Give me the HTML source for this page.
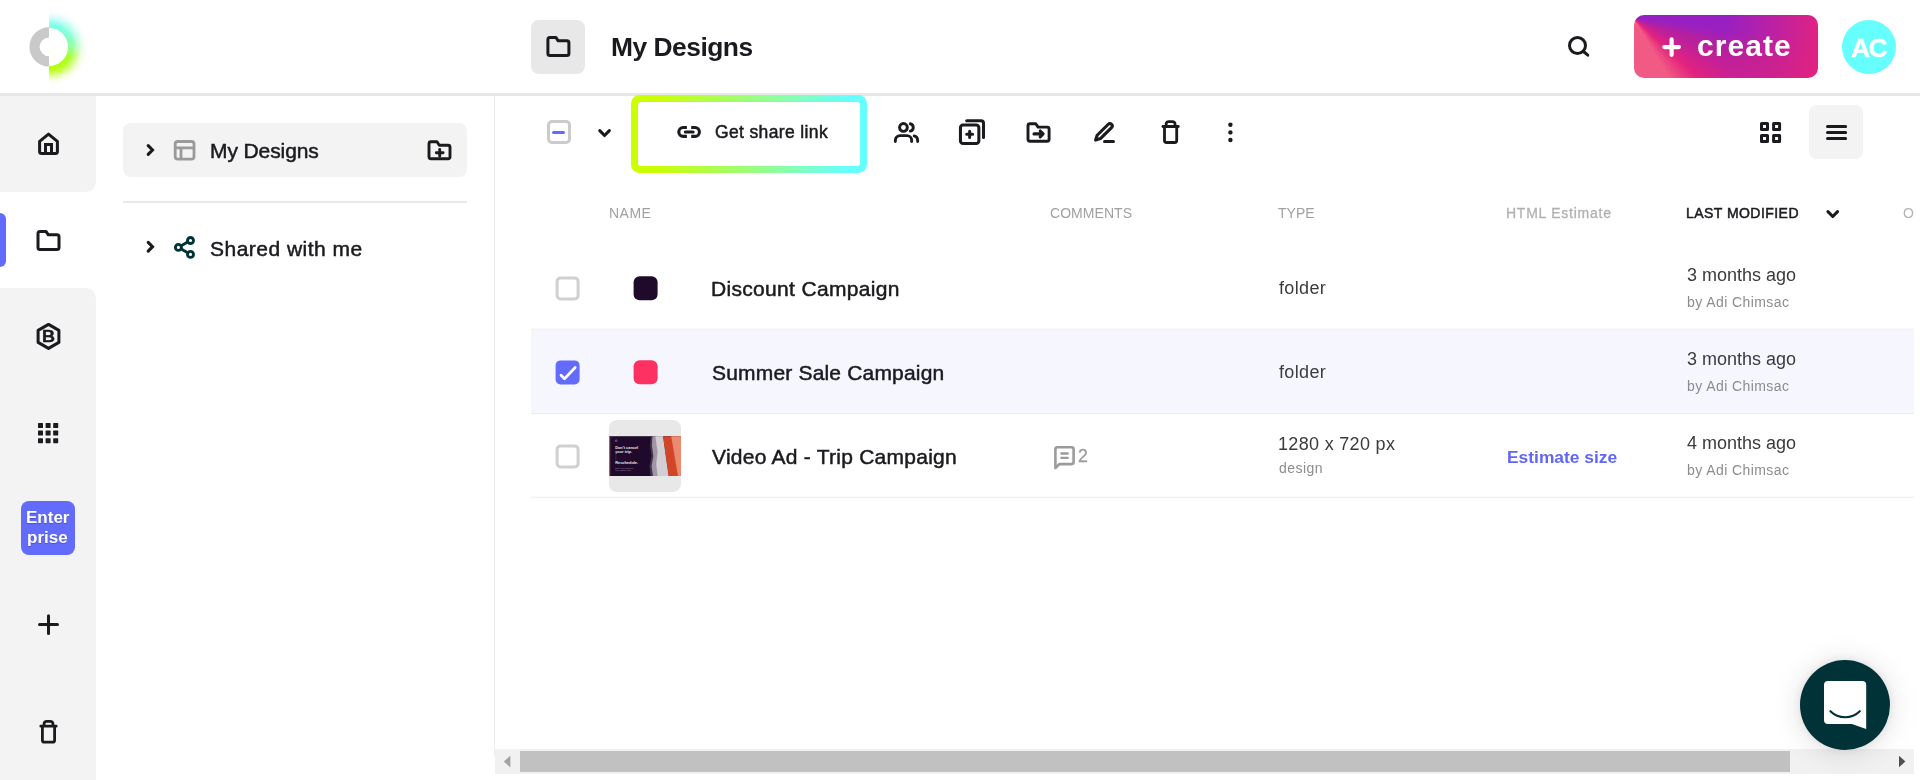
<!DOCTYPE html>
<html lang="en">
<head>
<meta charset="utf-8">
<title>My Designs</title>
<style>
*{box-sizing:border-box;margin:0;padding:0}
html,body{width:1920px;height:780px;overflow:hidden;background:#fff}
body{font-family:"Liberation Sans",sans-serif;color:#1b1b1f;position:relative}
.abs{position:absolute}
.t{position:absolute;white-space:nowrap;line-height:1;color:#1b1b1f;will-change:transform}
.med{-webkit-text-stroke:.5px currentColor}
#icons{position:absolute;left:0;top:0;width:1920px;height:780px;pointer-events:none}
#hline{left:0;top:93px;width:1920px;height:3px;background:#e7e7e7}
#logoglow{left:49px;top:8px;width:39px;height:78px;background:linear-gradient(180deg,#e2f0ff 0%,#a8f6fb 10%,#7dffea 20%,#7dffd0 35%,#8eff98 50%,#a8ff20 64%,#b4ff00 80%,#d4ff60 100%)}
#logofade{left:49px;top:8px;width:39px;height:78px;background:radial-gradient(circle at 0 39px,#fff 0,#fff 18.6px,rgba(255,255,255,0) 19.4px,rgba(255,255,255,.1) 23.5px,rgba(255,255,255,.5) 28.5px,rgba(255,255,255,.86) 33.5px,#fff 38.5px)}
#rail1{left:0;top:96px;width:96px;height:95.5px;background:#f3f3f3;border-radius:0 0 10px 0}
#rail2{left:0;top:287.6px;width:96px;height:493px;background:#f3f3f3;border-radius:0 10px 0 0}
#ind{left:0;top:213px;width:6px;height:54px;background:#636bfd;border-radius:0 6px 6px 0}
#ent{left:21px;top:501px;width:54px;height:54px;background:#636bfd;border-radius:8px}
#sideline{left:494px;top:96px;width:1px;height:660px;background:#ededed}
#myd{left:123px;top:123px;width:344px;height:54px;background:#f3f3f3;border-radius:8px}
#sdiv{left:123px;top:201px;width:344px;height:2px;background:#e9e9e9}
#ftile{left:531px;top:20px;width:54px;height:54px;background:#e8e8e8;border-radius:8px}
#create{left:1634px;top:15px;width:184px;height:63px;border-radius:10px;
 background:linear-gradient(90deg,rgba(228,34,127,0) 50%,rgba(228,34,127,.55) 80%,rgba(228,34,127,.95) 100%),
 conic-gradient(from 90deg at 0 4px,#981fc2 0deg,#9a20c0 7deg,#b3209f 17deg,#c62096 28deg,#e3227e 42deg,#ec447f 52deg,#f15a85 59deg,#f15a85 90deg,#981fc2 90deg)}
#avatar{left:1842px;top:20px;width:54px;height:54px;border-radius:50%;background:#67fefe}
.cb{width:24px;height:23.6px;border:3px solid #cbcbcb;border-radius:5px;background:#fff}
.cb.on{background:#636bfd;border-color:#636bfd}
#share{left:631px;top:95px;width:236px;height:78px;border-radius:8.5px;background:linear-gradient(90deg,#ccff00 0%,#caff08 12%,#99ff80 52%,#66ffff 92%,#66ffff 100%)}
#sharein{left:638px;top:102px;width:222.4px;height:64.3px;border-radius:3px;background:#fff}
#listtile{left:1809px;top:105px;width:54px;height:54px;background:#f3f3f3;border-radius:8px}
.row{left:531px;width:1383px;height:84px}
.rline{left:531px;width:1383px;height:2px;background:linear-gradient(#fafafa 0,#fafafa 50%,#f1f1f1 50%,#f1f1f1 100%)}
.sw{left:634px;width:24px;height:24px;border-radius:6px}
#thumb{left:609px;top:420px;width:72px;height:72px;border-radius:8px;background:#e8e8e8}
#sbtrack{left:495px;top:749px;width:1419px;height:25px;background:#f1f1f1}
#sbthumb{left:520px;top:751px;width:1270px;height:21px;background:#c1c1c1}
#chat{left:1800px;top:660px;width:90px;height:90px;border-radius:50%;background:#003238;box-shadow:0 2px 30px rgba(0,0,0,.13),0 0 8px rgba(0,0,0,.08)}
</style>
</head>
<body>
<!-- header -->
<header class="abs" id="hdr"></header>
<div class="abs" id="hline"></div>
<div class="abs" id="logoglow"></div><div class="abs" id="logofade"></div>
<!-- left rail -->
<nav class="abs" id="rail1"></nav><div class="abs" id="rail2"></div><div class="abs" id="ind"></div>
<div class="abs" id="ent"></div>
<div class="t " style="left:26.2px;top:509.21px;font-size:17px;font-weight:bold;color:#fff;text-shadow:0 1px 1px rgba(0,0,0,.25)">Enter</div>
<div class="t " style="left:27.4px;top:529.11px;font-size:17px;font-weight:bold;color:#fff;text-shadow:0 1px 1px rgba(0,0,0,.25)">prise</div>
<!-- side panel -->
<div class="abs" id="sideline"></div><div class="abs" id="myd"></div><div class="abs" id="sdiv"></div>
<div class="t med" style="left:210px;top:140.12px;font-size:21px;letter-spacing:-.1px">My Designs</div>
<div class="t med" style="left:210.3px;top:238.12px;font-size:21px;letter-spacing:.48px">Shared with me</div>
<!-- main header -->
<div class="abs" id="ftile"></div>
<div class="t " style="left:610.5px;top:34.35px;font-size:26.4px;font-weight:bold;letter-spacing:-.5px">My Designs</div>
<div class="abs" id="create"></div>
<div class="t " style="left:1697px;top:30.81px;font-size:30px;font-weight:bold;color:#fff;letter-spacing:1.05px">create</div>
<div class="abs" id="avatar"></div>
<div class="t " style="left:1851px;top:34.75px;font-size:26.4px;font-weight:bold;color:#fff;letter-spacing:-1.6px;-webkit-text-stroke:.4px #fff">AC</div>
<!-- toolbar -->
<div class="abs cb" style="left:547px;top:120px;width:24px;height:24px"></div>
<div class="abs" style="left:552.3px;top:131px;width:12.7px;height:3px;background:#636bfd;border-radius:2px"></div>
<div class="abs" id="share"></div><div class="abs" id="sharein"></div>
<div class="t med" style="left:714.6px;top:124.29px;font-size:17.5px;letter-spacing:.36px">Get share link</div>
<div class="abs" id="listtile"></div>
<!-- table header -->
<div class="t " style="left:609px;top:206.25px;font-size:14px;color:#a1a1a1;letter-spacing:.5px">NAME</div>
<div class="t " style="left:1049.6px;top:206.25px;font-size:14px;color:#a1a1a1;letter-spacing:.05px">COMMENTS</div>
<div class="t " style="left:1278px;top:206.25px;font-size:14px;color:#a1a1a1">TYPE</div>
<div class="t " style="left:1506px;top:206.25px;font-size:14px;color:#b1b1b1;letter-spacing:.75px;-webkit-text-stroke:.3px #b1b1b1">HTML Estimate</div>
<div class="t med" style="left:1686.1px;top:206.25px;font-size:14px;letter-spacing:.45px">LAST MODIFIED</div>
<div class="abs" style="left:1900px;top:200px;width:14px;height:30px;overflow:hidden"><div class="t " style="left:3px;top:6.25px;font-size:14px;color:#b3b3b3">OWNER</div></div>
<!-- rows -->
<div class="abs row" style="top:246px"></div>
<div class="abs rline" style="top:328px"></div>
<div class="abs row" style="top:330px;background:#f6f6fe;border-bottom:1px solid #eaecf5"></div>
<div class="abs row" style="top:414px"></div>
<div class="abs rline" style="top:496px"></div>
<!-- row Discount Campaign -->
<div class="abs cb" style="left:556px;top:276px;height:24px;transform:translate(-.4px,.4px);border-color:#d0d0d0"></div>
<div class="abs sw" style="top:276px;background:#200a2c;transform:translate(-.4px,.3px)"></div>
<div class="t med" style="left:711.2px;top:278.12px;font-size:21px;letter-spacing:0.32px">Discount Campaign</div>
<div class="t " style="left:1278.7px;top:278.76px;font-size:18px;color:#3b3b3e;letter-spacing:.35px">folder</div>
<div class="t " style="left:1687px;top:265.66px;font-size:18px;color:#3b3b3e">3 months ago</div>
<div class="t " style="left:1686.7px;top:294.85px;font-size:14px;color:#8c8c8e;letter-spacing:.42px">by Adi Chimsac</div>
<!-- row Summer Sale Campaign -->
<div class="abs cb on" style="left:556px;top:360px;height:24px;transform:translate(-.4px,.4px)"></div>
<div class="abs sw" style="top:360px;background:#fe3262;transform:translate(-.4px,.3px)"></div>
<div class="t med" style="left:711.5px;top:362.12px;font-size:21px;letter-spacing:0.18px">Summer Sale Campaign</div>
<div class="t " style="left:1278.7px;top:362.76px;font-size:18px;color:#3b3b3e;letter-spacing:.35px">folder</div>
<div class="t " style="left:1687px;top:349.66px;font-size:18px;color:#3b3b3e">3 months ago</div>
<div class="t " style="left:1686.7px;top:378.85px;font-size:14px;color:#8c8c8e;letter-spacing:.42px">by Adi Chimsac</div>
<!-- row Video Ad - Trip Campaign -->
<div class="abs cb" style="left:556px;top:444px;height:24px;transform:translate(-.4px,.4px);border-color:#d0d0d0"></div>
<div class="t med" style="left:711.8px;top:446.12px;font-size:21px;letter-spacing:0.25px">Video Ad - Trip Campaign</div>
<div class="t " style="left:1687px;top:433.66px;font-size:18px;color:#3b3b3e">4 months ago</div>
<div class="t " style="left:1686.7px;top:462.85px;font-size:14px;color:#8c8c8e;letter-spacing:.42px">by Adi Chimsac</div>
<div class="abs" id="thumb"></div>
<div class="t " style="left:1078.3px;top:447.82px;font-size:17.7px;color:#9b9b9b;-webkit-text-stroke:.3px #9b9b9b">2</div>
<div class="t " style="left:1278px;top:434.66px;font-size:18px;color:#3b3b3e;letter-spacing:.32px">1280 x 720 px</div>
<div class="t " style="left:1278.6px;top:461.05px;font-size:14px;color:#8c8c8e;letter-spacing:.45px">design</div>
<div class="t " style="left:1507px;top:449.27px;font-size:17.4px;font-weight:bold;color:#6166f7;letter-spacing:0">Estimate size</div>
<!-- scrollbar -->
<div class="abs" id="sbtrack"></div><div class="abs" id="sbthumb"></div>
<div class="abs" id="chat"></div>
<svg id="icons" viewBox="0 0 1920 780" width="1920" height="780">
<defs>
<clipPath id="lhalf"><rect x="20" y="20" width="29" height="60"/></clipPath>
<g id="folder"><path d="M-10.5 7V-7a2 2 0 0 1 2-2h6l2.3 3.4h8.7a2 2 0 0 1 2 2V7a2 2 0 0 1-2 2h-17a2 2 0 0 1-2-2z"/></g>
<g id="trash" stroke-width="2.8"><path d="M-7.7 -5.7H7.7M-4.45 -5.7V-8a2.6 2.6 0 0 1 2.6-2.6H1.85a2.6 2.6 0 0 1 2.6 2.6V-5.7M-6.1 -5.7V8.3a2 2 0 0 0 2 2H4.1a2 2 0 0 0 2-2V-5.7"/></g>
<g id="chevr"><path d="M-2.3 -4.4L2 0L-2.3 4.4"/></g>
<g id="chevd"><path d="M-4.8 -2.45L0 2.5L4.8 -2.45" stroke-linejoin="round"/></g>
</defs>
<!-- logo -->
<circle cx="49" cy="46.8" r="14.5" fill="none" stroke="#c9c9c9" stroke-width="10.2" clip-path="url(#lhalf)"/>
<g fill="none" stroke="#1b1b1f" stroke-width="3" stroke-linecap="round" stroke-linejoin="round">
<!-- rail: home -->
<path d="M39.6 141.3L48.5 134.1L57.4 141.3V151.4a2 2 0 0 1-2 2H41.6a2 2 0 0 1-2-2z"/>
<path d="M45.5 153V144.5H51.5V153" stroke-linejoin="miter"/>
<!-- rail: folder -->
<use href="#folder" x="48.5" y="240.4"/>
<!-- header folder -->
<use href="#folder" x="558.4" y="46.4"/>
<!-- rail: brand hexagon -->
<path d="M48.5 324.4L58.9 330.4V342.4L48.5 348.4L38.1 342.4V330.4z"/>
<!-- rail: plus -->
<path d="M48.5 615.7V633.6M39.5 624.6H57.5"/>
<!-- rail: trash -->
<use href="#trash" x="48.5" y="731.9"/>
<!-- toolbar trash -->
<use href="#trash" x="1170.6" y="132.2"/>
</g>
<!-- brand B -->
<text transform="translate(48.6 342.1) scale(1.1 1)" text-anchor="middle" font-family="Liberation Sans, sans-serif" font-weight="bold" font-size="16.4" fill="#1b1b1f" stroke="#1b1b1f" stroke-width=".4">B</text>
<!-- rail: grid -->
<g fill="#1b1b1f">
<rect x="38" y="423" width="5" height="5" rx=".6"/><rect x="45.6" y="423" width="5" height="5" rx=".6"/><rect x="53.2" y="423" width="5" height="5" rx=".6"/>
<rect x="38" y="430.6" width="5" height="5" rx=".6"/><rect x="45.6" y="430.6" width="5" height="5" rx=".6"/><rect x="53.2" y="430.6" width="5" height="5" rx=".6"/>
<rect x="38" y="438.2" width="5" height="5" rx=".6"/><rect x="45.6" y="438.2" width="5" height="5" rx=".6"/><rect x="53.2" y="438.2" width="5" height="5" rx=".6"/>
</g>
<!-- chevrons -->
<g fill="none" stroke="#1b1b1f" stroke-width="3.1" stroke-linecap="round" stroke-linejoin="miter">
<use href="#chevr" x="150.5" y="150"/>
<use href="#chevr" x="150.5" y="246.7"/>
<use href="#chevd" x="604.55" y="133"/>
<use href="#chevd" x="1832.75" y="214"/>
</g>
<!-- side: layout icon -->
<g fill="none" stroke="#9a9a9a" stroke-width="2.8" stroke-linejoin="round">
<rect x="175.2" y="141.5" width="18.8" height="17.7" rx="2.6"/>
<path d="M175.2 147.8H194M181 147.8V159"/>
</g>
<!-- side: folder plus -->
<g fill="none" stroke="#1b1b1f" stroke-width="2.9" stroke-linecap="round" stroke-linejoin="round">
<path d="M429 156.8V143.8a2 2 0 0 1 2-2h6l2.3 3.4h8.7a2 2 0 0 1 2 2V156.8a2 2 0 0 1-2 2h-17a2 2 0 0 1-2-2z"/>
<path d="M439.7 149.4V156.2M436.3 152.8H443.1" stroke-width="2.9"/>
</g>
<!-- side: share -->
<g fill="none" stroke="#003338" stroke-width="2.9" stroke-linecap="round">
<circle cx="190.5" cy="240.5" r="3"/><circle cx="178.4" cy="247.4" r="3"/><circle cx="190.5" cy="254.4" r="3"/>
<path d="M181.2 245.8L187.7 242.1M181.2 249L187.7 252.8"/>
</g>
<!-- search -->
<g fill="none" stroke="#1b1b1f" stroke-width="3" stroke-linecap="round">
<circle cx="1577.5" cy="45.5" r="8"/><path d="M1583.5 51.5L1587.8 55.2"/>
</g>
<!-- create plus -->
<path d="M1671.6 39.4V54.8M1664.3 47.1H1678.9" fill="none" stroke="#fff" stroke-width="4.2" stroke-linecap="round"/>
<!-- toolbar: link -->
<g fill="none" stroke="#1b1b1f" stroke-width="3.1">
<path d="M686.9 127.45H683.25a4.45 4.45 0 0 0 0 8.9H686.9M691.2 127.45H694.95a4.45 4.45 0 0 1 0 8.9H691.2"/>
<path d="M685.3 131.9H693.2" stroke-linecap="round" stroke-width="3"/>
</g>
<!-- toolbar: users -->
<g fill="none" stroke="#1b1b1f" stroke-width="2.9" stroke-linecap="round" stroke-linejoin="round">
<circle cx="903.45" cy="127.45" r="3.9"/>
<path d="M895.35 141.5V140.2a4.6 4.6 0 0 1 4.6-4.6h7.1a4.6 4.6 0 0 1 4.6 4.6V141.5"/>
<path d="M910.3 123.75a3.8 3.8 0 0 1 0 7.4"/>
<path d="M914.2 135.9a4.6 4.6 0 0 1 3.45 4.4V141.5"/>
</g>
<!-- toolbar: duplicate -->
<g fill="none" stroke="#1b1b1f" stroke-width="3.05" stroke-linecap="round" stroke-linejoin="round">
<rect x="960.45" y="125.05" width="18.4" height="18.5" rx="2.6"/>
<path d="M966.7 120.7H981a2.5 2.5 0 0 1 2.5 2.5V137.4"/>
<path d="M969.65 131.3V137.4M966.7 134.35H972.6" stroke-width="3"/>
</g>
<!-- toolbar: folder move -->
<g fill="none" stroke="#1b1b1f" stroke-width="2.9" stroke-linecap="round" stroke-linejoin="round">
<path d="M1028 139.3V125.7a2 2 0 0 1 2-2h5.8l2.3 3.4h9a2 2 0 0 1 2 2V139.3a2 2 0 0 1-2 2h-17.1a2 2 0 0 1-2-2z"/>
<path d="M1034 133.9H1042.6M1040.2 131L1043.1 133.9L1040.2 136.8" stroke-width="3.1"/>
</g>
<!-- toolbar: pencil -->
<g fill="none" stroke="#1b1b1f" stroke-width="3.1" stroke-linecap="round" stroke-linejoin="round">
<path d="M1095.6 140.1L1097.17 135.27L1108.27 124.27A2.3 2.3 0 0 1 1111.53 127.53L1100.43 138.53Z"/>
<path d="M1104.5 141.5H1113.5" stroke-width="3"/>
</g>
<!-- toolbar: dots -->
<g fill="#1b1b1f"><circle cx="1230.4" cy="124.8" r="2.2"/><circle cx="1230.4" cy="132.4" r="2.2"/><circle cx="1230.4" cy="140" r="2.2"/></g>
<!-- toolbar: grid view -->
<g fill="none" stroke="#1b1b1f" stroke-width="3" stroke-linejoin="round">
<rect x="1761.5" y="123.6" width="6" height="6"/><rect x="1773.6" y="123.6" width="6" height="6"/>
<rect x="1761.5" y="135.5" width="6" height="6"/><rect x="1773.6" y="135.5" width="6" height="6"/>
</g>
<!-- toolbar: list view -->
<path d="M1827.5 126.5H1845.6M1827.5 132.5H1845.6M1827.5 138.5H1845.6" fill="none" stroke="#1b1b1f" stroke-width="3" stroke-linecap="round"/>
<!-- checkbox check -->
<path d="M561 375.2L564.5 378.7L575.2 367.5" fill="none" stroke="#fff" stroke-width="2.7" stroke-linecap="round" stroke-linejoin="round"/>
<!-- comment icon -->
<g fill="none" stroke="#9b9b9b" stroke-linecap="round" stroke-linejoin="round">
<path d="M1055.4 468V449.3a2 2 0 0 1 2-2h14.2a2 2 0 0 1 2 2v12.8a2 2 0 0 1-2 2h-12.3z" stroke-width="2.6"/>
<path d="M1061.3 453.5H1067.7M1061.3 457.9H1067.7" stroke-width="2.3"/>
</g>
<!-- thumbnail -->
<g>
<rect x="609" y="436.2" width="72" height="39.8" fill="#200a2c"/>
<rect x="609" y="436.2" width="1.2" height="39.8" fill="#c9553c"/>
<path d="M650.8 436.2H663L668.6 476H650.5L649.6 466L651.4 456L650 446z" fill="#46354e"/>
<path d="M652.4 436.2H663L668.6 476H653L651.6 466L653.4 456L652 446z" fill="#a197a4"/>
<path d="M655.4 436.2H663L668.6 476H657.6L656.2 464L657.6 452z" fill="#d2ced4"/>
<path d="M663 436.2H681V476H668.6z" fill="#d24628"/>
<path d="M671.2 436.2H681V476H678z" fill="#ea8a6e"/>
<g font-family="Liberation Sans, sans-serif" fill="#e9e4ea" font-weight="bold">
<text x="615.2" y="448.6" font-size="3.9">Don't cancel</text>
<text x="615.2" y="452.9" font-size="3.9">your trip.</text>
<text x="615.2" y="464" font-size="3.9">Reschedule.</text>
<text x="615.2" y="468.6" font-size="2" fill="#9d8fa3" font-weight="normal">Book your flight with</text>
<text x="615.2" y="470.8" font-size="2" fill="#9d8fa3" font-weight="normal">zero change fees</text>
</g>
<circle cx="616.2" cy="440.7" r=".9" fill="none" stroke="#cfc6d2" stroke-width=".4"/>
<path d="M615.9 454.5V460" stroke="#7a6a82" stroke-width=".3"/>
</g>
<!-- scrollbar arrows -->
<path d="M510.4 755.6V767.4L503.8 761.5z" fill="#a3a3a3"/>
<path d="M1899 755.8V767.2L1905.4 761.5z" fill="#505050"/>
<!-- chat bubble -->
<path d="M1824 685a4 4 0 0 1 4-4h34.2a4 4 0 0 1 4 4V728.9L1851.8 724H1828a4 4 0 0 1-4-4z" fill="#fff"/>
<path d="M1830.4 711.2a21 21 0 0 0 29.4 0" fill="none" stroke="#003238" stroke-width="2.1" stroke-linecap="round"/>
</svg>

</body>
</html>
